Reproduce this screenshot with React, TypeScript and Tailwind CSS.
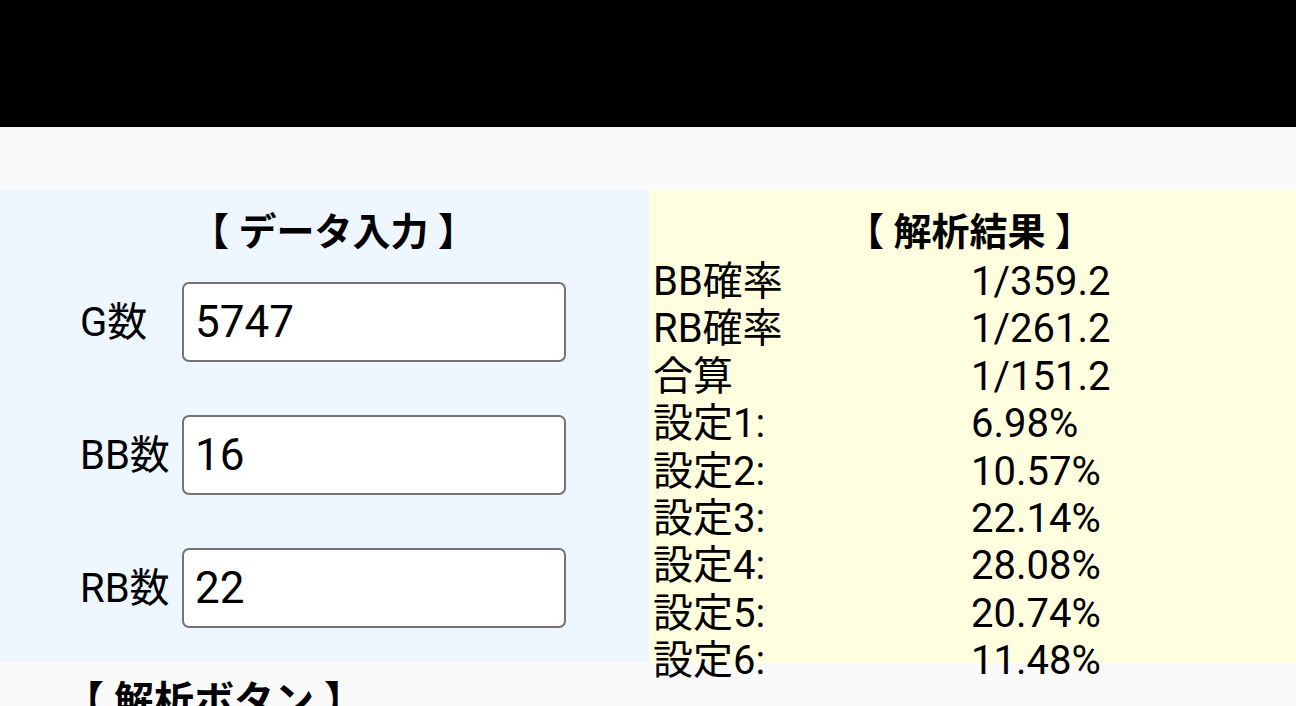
const inputs = [
  { label: "G数", value: "5747" },
  { label: "BB数", value: "16" },
  { label: "RB数", value: "22" },
];

const results = [
  ["BB確率", "1/359.2"],
  ["RB確率", "1/261.2"],
  ["合算", "1/151.2"],
  ["設定1:", "6.98%"],
  ["設定2:", "10.57%"],
  ["設定3:", "22.14%"],
  ["設定4:", "28.08%"],
  ["設定5:", "20.74%"],
  ["設定6:", "11.48%"],
];

export default function App() {
  return (
    <div
      className="w-full h-[706px] overflow-hidden bg-[#fafafa] text-black"
      style={{ fontFamily: '"Roboto", "Noto Sans CJK JP", sans-serif' }}
    >
      <div className="h-[127px] bg-black" />
      <div className="h-[63px]" />

      <div className="flex">
        <div className="w-[649px] h-[472px] bg-[#eef6ff] pt-[16px]">
          <h2 className="text-center text-[38px] leading-[52px] font-bold pl-[18px]">【 データ入力 】</h2>
          <div className="mt-[24px] flex flex-col gap-[53px] pl-[80px]">
            {inputs.map((row) => (
              <div key={row.label} className="grid grid-cols-[102px_384px] items-center">
                <span className="text-[40px] leading-[47px]">{row.label}</span>
                <input
                  readOnly
                  value={row.value}
                  className="h-[80px] w-[384px] rounded-[7px] border-2 border-[#737373] bg-white pl-[11px] text-[44px] outline-none"
                />
              </div>
            ))}
          </div>
        </div>

        <div className="flex-1 h-[473px] bg-[#ffffe0] pt-[16px] pl-[4px]">
          <h2 className="text-center text-[38px] leading-[52px] font-bold pr-[10px]">【 解析結果 】</h2>
          <div className="grid grid-cols-[318px_auto] text-[40px] leading-[47.4px]">
            {results.map(([k, v]) => (
              <div key={k} className="contents">
                <span>{k}</span>
                <span>{v}</span>
              </div>
            ))}
          </div>
        </div>
      </div>

      <h2 className="pl-[64px] pt-[13px] text-[40px] leading-[52px] font-bold">【 解析ボタン 】</h2>
    </div>
  );
}
